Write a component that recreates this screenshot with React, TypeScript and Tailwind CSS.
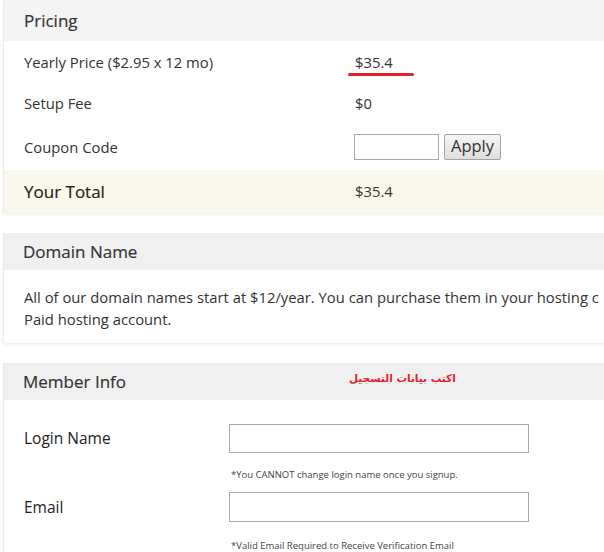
import React from "react";

const font = { fontFamily: '"Open Sans", "Noto Sans", Arial, sans-serif' };

export default function App() {
  return (
    <div className="w-[604px] h-[552px] overflow-hidden bg-white text-[#333]" style={font}>
      {/* Pricing */}
      <div className="ml-[3px] w-[640px] border-l border-[#ececec] shadow-[0_2px_3px_rgba(0,0,0,0.06)]">
        <div className="h-[41px] bg-[#f4f4f4] pl-[20px] flex items-center text-[17px] text-[#333] [-webkit-text-stroke:0.18px_#333]">
          Pricing
        </div>
        <div className="text-[14.8px] text-[#333]">
          <div className="h-[42px] flex items-center pl-[20px]">
            <div className="w-[331px]">Yearly Price ($2.95 x 12 mo)</div>
            <div className="relative">
              $35.4
              <div className="absolute left-[-7px] top-[22px] w-[66px] h-[3px] rounded-full bg-[#e8202a]" />
            </div>
          </div>
          <div className="h-[41px] flex items-center pl-[20px]">
            <div className="w-[331px]">Setup Fee</div>
            <div>$0</div>
          </div>
          <div className="h-[46px] flex items-center pl-[20px]">
            <div className="w-[330px]">Coupon Code</div>
            <div className="flex items-center gap-[5px]">
              <input className="w-[85px] h-[26px] border border-[#a9a9a9] bg-white outline-none" />
              <button className="w-[57px] h-[26px] border border-[#a3a3a3] rounded-[2px] bg-gradient-to-b from-[#f6f6f6] to-[#dedede] text-[16.5px] text-[#333] leading-none pb-[2px]">
                Apply
              </button>
            </div>
          </div>
          <div className="h-[43px] flex items-center pl-[20px] bg-[#faf8ec]">
            <div className="w-[331px] text-[17px] text-[#222] [-webkit-text-stroke:0.18px_#222]">Your Total</div>
            <div>$35.4</div>
          </div>
        </div>
      </div>

      {/* Domain Name */}
      <div className="mt-[20px] ml-[3px] w-[640px] border-l border-[#ececec] shadow-[0_2px_3px_rgba(0,0,0,0.06)]">
        <div className="h-[37px] bg-[#f0f0f0] pl-[19px] flex items-center text-[17px] text-[#333] [-webkit-text-stroke:0.18px_#333]">
          Domain Name
        </div>
        <div className="pl-[20px] pt-[16px] pb-[13px] text-[14.8px] leading-[22px] text-[#333] whitespace-nowrap overflow-hidden">
          <div>All of our domain names start at $12/year. You can purchase them in your hosting c</div>
          <div>Paid hosting account.</div>
        </div>
      </div>

      {/* Member Info */}
      <div className="mt-[20px] ml-[3px] w-[640px] border-l border-[#ececec]">
        <div className="h-[37px] bg-[#f0f0f0] pl-[19px] flex items-center text-[17px] text-[#333] [-webkit-text-stroke:0.18px_#333] relative">
          Member Info
          <div
            className="absolute left-[345px] top-[8px] text-[10.5px] font-bold text-[#e8202a] [-webkit-text-stroke:0px]"
            style={{ fontFamily: '"DejaVu Sans", sans-serif' }}
            dir="rtl"
          >
            اكتب بيانات التسجيل
          </div>
        </div>
        <div className="pl-[20px] pt-[24px]">
          <div className="flex items-center">
            <div className="w-[205px] text-[15.5px] text-[#222]">Login Name</div>
            <input className="w-[300px] h-[29px] border border-[#a9a9a9] bg-white outline-none" />
          </div>
          <div className="ml-[207px] mt-[15px] text-[9.5px] text-[#444]">*You CANNOT change login name once you signup.</div>
          <div className="flex items-center mt-[10px]">
            <div className="w-[205px] text-[15.5px] text-[#222]">Email</div>
            <input className="w-[300px] h-[30px] border border-[#a9a9a9] bg-white outline-none" />
          </div>
          <div className="ml-[207px] mt-[17px] text-[9.5px] text-[#444]">*Valid Email Required to Receive Verification Email</div>
        </div>
      </div>
    </div>
  );
}
